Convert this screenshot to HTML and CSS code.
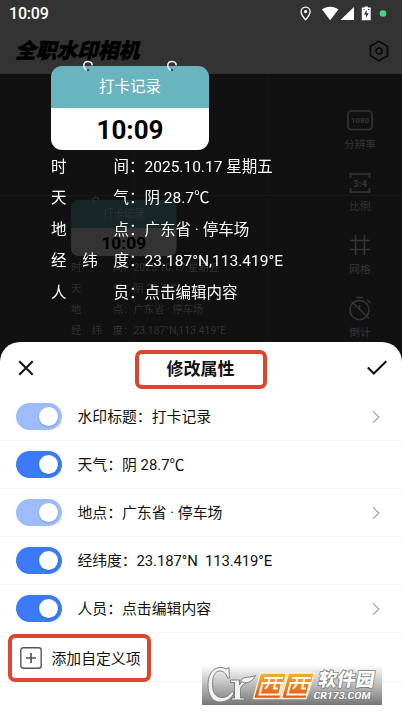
FILE: index.html
```html
<!DOCTYPE html>
<html lang="zh-CN">
<head>
<meta charset="utf-8">
<title>修改属性</title>
<link rel="stylesheet" href="styles.css">
</head>
<body>
<div class="screen">
  <header class="top">
    <div class="status">
      <span class="clock">10:09</span>
      <svg class="status-icons" width="90" height="18" viewBox="0 0 90 18">
        <path d="M7.600 1.200c-2.600 0-4.500 2-4.500 4.500 0 3.200 4.500 8 4.500 8s4.500-4.800 4.500-8c0-2.500-1.900-4.500-4.500-4.500z" fill="none" stroke="#fff" stroke-width="1.300"/>
        <circle cx="7.600" cy="5.600" r="1.600" fill="#fff"/>
        <path d="M24 3.400c4.700-3.700 11.700-3.700 16.400 0L32.200 14.300z" fill="#fff"/>
        <path d="M56 1v13H42.500z" fill="#fff"/>
        <path d="M66.500 .4h3.500v1.200h2.700v12.700h-8.900V1.600h2.700z" fill="#fff"/>
        <path d="M68.700 4l-2.800 4.600h2v3.300l2.800-4.600h-2z" fill="#333"/>
        <path d="M65.500 3.500h1.200M70 3.500h1.200" stroke="#555" stroke-width="1"/>
        <circle cx="85" cy="7.500" r="3.300" fill="#3ddc84"/>
      </svg>
    </div>
    <div class="appbar">
      <h1>全职水印相机</h1>
      <svg width="20" height="22" viewBox="0 0 20 22" fill="none" stroke="#0a0a0a" stroke-width="1.700" stroke-linejoin="round">
        <path d="M10 1.300l8.500 4.900v9.600L10 20.700l-8.500-4.900V6.200z"/><circle cx="10" cy="11" r="3"/>
      </svg>
    </div>
  </header>

  <main class="viewfinder">
    <div class="mark mark-small">
      <div class="calendar">
        <svg class="ring ring-l" viewBox="0 0 12 12"><path d="M5.500 10.500C0 8 1 1.500 6 1.500c3 0 4.500 2 4 4"/><circle cx="6" cy="10" r="1.200"/></svg>
        <svg class="ring ring-r" viewBox="0 0 12 12"><path d="M5.500 10.500C0 8 1 1.500 6 1.500c3 0 4.500 2 4 4"/><circle cx="6" cy="10" r="1.200"/></svg>
        <div class="cal-title">打卡记录</div><div class="cal-time">10:09</div>
      </div>
      <dl>
        <div><dt><i>时</i><i>间</i></dt><dd>：2025.10.17 星期五</dd></div>
        <div><dt><i>天</i><i>气</i></dt><dd>：阴 28.7℃</dd></div>
        <div><dt><i>地</i><i>点</i></dt><dd>：广东省 · 停车场</dd></div>
        <div><dt><i>经</i><i>纬</i><i>度</i></dt><dd>：23.187°N,113.419°E</dd></div>
      </dl>
    </div>
    <aside class="tools">
      <div class="tool">
        <svg width="26" height="26" viewBox="0 0 26 26"><rect x="1" y="4" width="24" height="18.500" rx="3.500"/><text x="13" y="16" class="t1080" textLength="18" lengthAdjust="spacingAndGlyphs">1080</text></svg>
        <span>分辨率</span>
      </div>
      <div class="tool">
        <svg width="26" height="26" viewBox="0 0 26 26"><path d="M3.500 8V4h19v4M3.500 18v4h19v-4"/><text x="13" y="16.500" class="t34" textLength="14">3:4</text></svg>
        <span>比例</span>
      </div>
      <div class="tool">
        <svg width="26" height="26" viewBox="0 0 26 26"><path d="M8.500 3v20M17.500 3v20M3 8.500h20M3 17.500h20"/></svg>
        <span>网格</span>
      </div>
      <div class="tool">
        <svg width="26" height="26" viewBox="0 0 26 26"><circle cx="12.500" cy="15" r="9.500"/><path d="M9 2.500h7M20 4.500l3.500 3.500M4.500 6.500l17.500 17M12.500 10v5"/></svg>
        <span>倒计</span>
      </div>
    </aside>
  </main>

  <div class="mark mark-main">
    <div class="calendar">
      <svg class="ring ring-l" viewBox="0 0 12 12"><path d="M5.500 10.500C0 8 1 1.500 6 1.500c3 0 4.500 2 4 4"/><circle cx="6" cy="10" r="1.200"/></svg>
      <svg class="ring ring-r" viewBox="0 0 12 12"><path d="M5.500 10.500C0 8 1 1.500 6 1.500c3 0 4.500 2 4 4"/><circle cx="6" cy="10" r="1.200"/></svg>
      <div class="cal-title">打卡记录</div><div class="cal-time">10:09</div>
    </div>
    <dl>
      <div><dt><i>时</i><i>间</i></dt><dd>：2025.10.17 星期五</dd></div>
      <div><dt><i>天</i><i>气</i></dt><dd>：阴 28.7℃</dd></div>
      <div><dt><i>地</i><i>点</i></dt><dd>：广东省 · 停车场</dd></div>
      <div><dt><i>经</i><i>纬</i><i>度</i></dt><dd>：23.187°N,113.419°E</dd></div>
      <div><dt><i>人</i><i>员</i></dt><dd>：点击编辑内容</dd></div>
    </dl>
  </div>

  <section class="sheet">
    <div class="sheet-head">
      <svg width="20" height="20" viewBox="0 0 20 20" class="ink"><path d="M3.300 3.300l13.400 13.400M16.700 3.300l-13.400 13.400"/></svg>
      <h2>修改属性</h2>
      <svg width="20" height="20" viewBox="0 0 20 20" class="ink"><path d="M.800 9.500l6 6L19.300 3.200"/></svg>
    </div>
    <div class="row"><span class="switch dim"></span><span class="label">水印标题：打卡记录</span><svg class="chev" width="8" height="14" viewBox="0 0 8 14"><path d="M1 1.200L6.800 7 1 12.800"/></svg></div>
    <div class="row"><span class="switch"></span><span class="label">天气：阴 28.7℃</span></div>
    <div class="row"><span class="switch dim"></span><span class="label">地点：广东省 · 停车场</span><svg class="chev" width="8" height="14" viewBox="0 0 8 14"><path d="M1 1.200L6.800 7 1 12.800"/></svg></div>
    <div class="row"><span class="switch"></span><span class="label coords">经纬度：23.187°N&nbsp; 113.419°E</span></div>
    <div class="row"><span class="switch"></span><span class="label">人员：点击编辑内容</span><svg class="chev" width="8" height="14" viewBox="0 0 8 14"><path d="M1 1.200L6.800 7 1 12.800"/></svg></div>
    <div class="row add-row">
      <div class="add">
        <svg width="22" height="22" viewBox="0 0 22 22" fill="none" stroke="#555" stroke-width="1.400"><rect x=".8" y=".8" width="20.400" height="20.400" rx="2.500"/><path d="M11 6v10M6 11h10" stroke-width="1.700"/></svg>
        <span>添加自定义项</span>
      </div>
    </div>
  </section>

  <div class="badge">
    <svg width="180" height="40" viewBox="0 0 180 40">
      <defs><linearGradient id="o" x1="0" y1="0" x2="0" y2="1"><stop offset="0" stop-color="#f7b32b"/><stop offset="1" stop-color="#e2521d"/></linearGradient></defs>
      <g fill="#f1f1f1" stroke="#777" stroke-width=".9" stroke-linejoin="round">
        <path d="M24 4l3-1.500.5 10.500h-2C24 8 21 6 18 6c-5 0-7.500 5-7.500 13.500S14 32.500 20 32.500c5 0 8-3 10-6l2 1C30 33 25 37 18 37 10 37 6 29.500 6 20S10 2.500 18.500 2.500c2.500 0 4 .7 5.500 1.500z"/>
        <path d="M28.500 15h9v5c1.500-3 3-4.500 5-5l1 3.500c-3 1-5 3-5 6V33h4v2h-13v-2h3V17.500h-4z"/>
        <path d="M38.500 16c3-5.500 8.500-2.500 15-5.500-3 6.500-10 9.500-15 5.500z"/>
      </g>
      <path d="M58.500 8h26L78 33.500H51.500zM86.500 8h26L104 33.500H79.500z" fill="url(#o)" stroke="#fff3dc" stroke-width="1.300"/>
      <g fill="none" stroke="#fff8e9" stroke-width="2">
        <path d="M62 13h19M60.500 18h19.500l-2.800 11.500H57.500zM67.500 13l-1.500 7-3 4M74.500 13L72 23.500h4"/>
        <path d="M90 13h19M88.500 18H108l-2.800 11.500H85.500zM95.500 13l-1.500 7-3 4M102.500 13L100 23.500h4"/>
      </g>
      <text class="badge-name" transform="translate(115.500 21.300) skewX(-10)" textLength="56">软件园</text>
      <text class="badge-url" transform="translate(111 34) skewX(-10)" textLength="57" lengthAdjust="spacingAndGlyphs">CR173.COM</text>
    </svg>
  </div>
</div>
</body>
</html>
```

FILE: styles.css
```css
* { box-sizing: border-box; }
body { margin: 0; font-family: Roboto, "Noto Sans CJK SC", sans-serif; }
h1, h2, dl, dd { margin: 0; }
i { font-style: normal; }
.screen { position: relative; width: 402px; height: 715px; overflow: hidden; background: #111; }

.top { height: 74px; background: #333; }
.status { height: 28px; padding: 0 10px 0 9px; display: flex; justify-content: space-between; align-items: center; color: #fff; }
.clock { font-size: 16px; font-weight: 500; line-height: 28px; letter-spacing: -.2px; }
.status-icons { margin: 2px 4px 0 0; }
.appbar { height: 46px; padding: 0 13px 0 15px; display: flex; justify-content: space-between; align-items: center; }
.appbar h1 { font-size: 20.700px; font-weight: 900; font-style: italic; line-height: 24px; color: #000; -webkit-text-stroke: .5px #000; }

.viewfinder { height: 270px; padding: 126px 22px 0 70.500px; display: flex; justify-content: space-between; align-items: flex-start;
  background: linear-gradient(#191919, #191919) 0 121px / 100% 1px no-repeat, linear-gradient(#161616, #161616) 133px 0 / 1px 100% no-repeat, linear-gradient(#161616, #161616) 267px 0 / 1px 100% no-repeat; }
.tools { margin-top: -94px; width: 40px; color: #363636; }
.tool { height: 62.700px; display: flex; flex-direction: column; align-items: center; }
.tool svg { height: 28px; flex: none; fill: none; stroke: currentColor; stroke-width: 1.600; }
.tool text { fill: currentColor; stroke: none; text-anchor: middle; font-weight: 700; }
.t1080 { font-size: 7.500px; }
.t34 { font-size: 9.500px; }
.tool span { font-size: 10.700px; line-height: 17px; margin-top: 1.500px; white-space: nowrap; }

.calendar { position: relative; width: 158px; height: 84px; border-radius: 11px; background: linear-gradient(#68b4bf 42px, #fff 42px); text-align: center; }
.cal-title { height: 42px; line-height: 43px; font-size: 15.500px; color: #fff; }
.cal-time { height: 42px; line-height: 45px; font-size: 26px; font-weight: 700; color: #000; }
.ring { position: absolute; top: -6px; width: 12px; height: 12px; fill: none; stroke: #e8eeee; stroke-width: 1.600; }
.ring circle { fill: #365055; stroke: none; }
.ring-l { left: 31px; }
.ring-r { left: 115px; }
.mark dl { padding-top: 2px; color: #fff; font-size: 15.500px; }
.mark dl div { display: flex; height: 31.400px; line-height: 31.400px; white-space: nowrap; }
.mark dt { flex: none; width: 78px; display: flex; justify-content: space-between; }
.mark-main { position: absolute; left: 51px; top: 66px; }
.mark-small { width: 106px; height: 140px; transform: scale(.668); transform-origin: 0 0; }
.mark-small .calendar { background: linear-gradient(#152528 42px, #333 42px); }
.mark-small .cal-title, .mark-small dl { color: #333; }
.mark-small .ring { stroke: #333; }
.mark-small .ring circle { fill: #222; }

.sheet { position: absolute; left: 0; right: 0; top: 342px; bottom: 0; background: #fff; border-radius: 20px 20px 0 0; color: #111; }
.sheet-head { height: 51px; padding: 0 15px 0 16px; display: flex; justify-content: space-between; align-items: center; }
.sheet-head h2 { width: 132px; height: 39px; margin: 4px 1px 0 -1px; border: 4px solid #dd452e; border-radius: 7px; font-size: 17px; line-height: 30px; text-align: center; font-weight: 700; }
.ink { fill: none; stroke: #111; stroke-width: 2; }
.row { height: 48.100px; padding: 0 22px 0 15.500px; display: flex; align-items: center; border-bottom: 1px solid #f6f6f6; font-size: 14.850px; }
.switch { width: 46.500px; height: 27px; padding: 4px; border-radius: 14px; background: #3b7afa; display: flex; justify-content: flex-end; }
.switch::after { content: ""; width: 19px; height: 19px; border-radius: 50%; background: #fff; box-shadow: 0 1px 2px #0003; }
.switch.dim { background: #9dbcfc; }
.label { flex: 1; margin-left: 15.500px; padding-top: 1px; line-height: 24px; white-space: nowrap; }
.coords { letter-spacing: -.08px; }
.chev { fill: none; stroke: #a0a1ad; stroke-width: 1.200; }
.add-row { padding: 1px 8px 0; }
.add { flex: none; width: 143px; height: 48px; padding-left: 8px; display: flex; align-items: center; gap: 9.500px; border: 4px solid #dd452e; border-radius: 7px; white-space: nowrap; }
.add svg { flex: none; }

.badge { position: absolute; left: 202px; top: 665px; width: 180px; height: 40px; background: linear-gradient(#fff, #777); }
.badge svg { display: block; }
.badge-name { font-size: 18.500px; font-weight: 900; fill: #fff; stroke: #777; stroke-width: 1.500px; paint-order: stroke; }
.badge-url { font-size: 10px; font-weight: 700; fill: #fff; stroke: #777; stroke-width: 1px; paint-order: stroke; }
```
